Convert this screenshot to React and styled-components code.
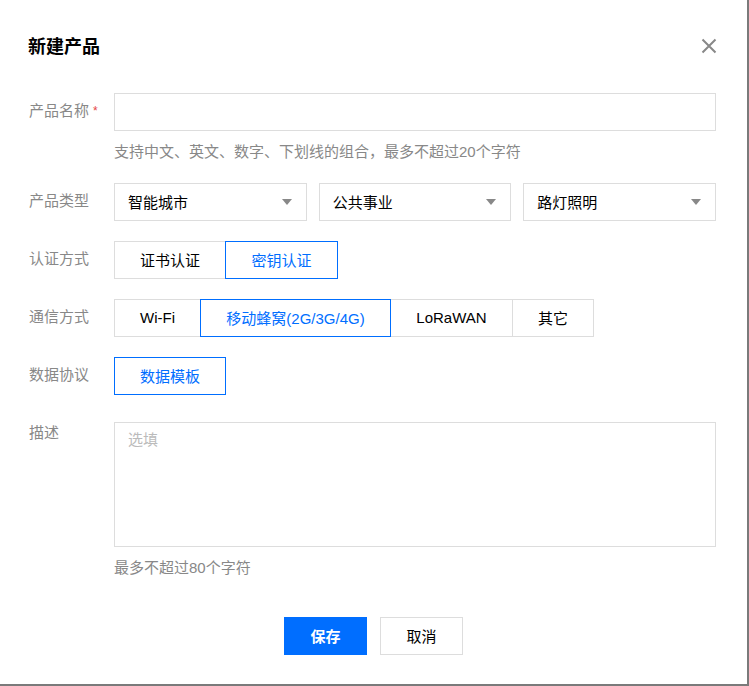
import React from 'react';
import styled, { createGlobalStyle } from 'styled-components';

const GlobalStyle = createGlobalStyle`
  html, body {
    margin: 0;
    padding: 0;
    background: #7a7a7a;
  }
  * {
    box-sizing: border-box;
  }
`

const Dialog = styled.div`
  width: 747px;
  height: 684px;
  background: #fff;
  padding: 0 31px 0 28px;
  font-family: "Liberation Sans", "Noto Sans CJK SC", sans-serif;
  font-size: 15px;
  color: #000;
  display: flex;
  flex-direction: column;
`

const Header = styled.div`
  height: 93px;
  display: flex;
  align-items: flex-start;
  justify-content: space-between;
  padding-top: 35px;
`

const Title = styled.h2`
  margin: 0;
  font-size: 18px;
  line-height: 24px;
  font-weight: bold;
  color: #000;
`

const Close = styled.button`
  width: 16px;
  height: 16px;
  margin-top: 3px;
  margin-right: -1px;
  padding: 0;
  border: 0;
  background: none;
  cursor: pointer;
  display: flex;
`

const Form = styled.div`
  display: flex;
  flex-direction: column;
`

const Row = styled.div`
  display: flex;
  align-items: flex-start;
  margin-bottom: ${p => p.$gap ?? 20}px;
`

const Label = styled.div`
  width: 86px;
  flex-shrink: 0;
  padding-left: 1px;
  color: #888;
  line-height: ${p => (p.$top ? '22px' : '36px')};
`

const Required = styled.span`
  color: #e54545;
  font-size: 12px;
  margin-left: 4px;
  vertical-align: top;
`

const Field = styled.div`
  flex: 1;
  display: flex;
  flex-direction: column;
`

const Input = styled.div`
  height: 38px;
  border: 1px solid #ddd;
  background: #fff;
`

const Hint = styled.div`
  margin-top: 10px;
  line-height: 22px;
  color: #888;
`

const Selects = styled.div`
  display: flex;
  gap: 12px;
`

const Select = styled.div`
  flex: 1;
  height: 38px;
  border: 1px solid #ddd;
  display: flex;
  align-items: center;
  justify-content: space-between;
  padding: 0 14px 2px 13px;
  color: #000;
`

const Caret = styled.span`
  width: 0;
  height: 0;
  margin-top: 2px;
  border-left: 5px solid transparent;
  border-right: 5px solid transparent;
  border-top: 6px solid #888;
`

const Segment = styled.div`
  display: flex;
`

const SegButton = styled.div`
  height: 38px;
  width: ${p => p.$w}px;
  display: flex;
  align-items: center;
  justify-content: center;
  padding-bottom: 1px;
  border: 1px solid ${p => (p.$active ? '#006eff' : '#ddd')};
  color: ${p => (p.$active ? '#006eff' : '#000')};
  margin-left: -1px;
  position: relative;
  z-index: ${p => (p.$active ? 1 : 0)};
  &:first-child {
    margin-left: 0;
  }
`

const TextArea = styled.div`
  height: 125px;
  border: 1px solid #ddd;
  padding: 6px 13px;
  line-height: 22px;
  color: #bbb;
`

const Footer = styled.div`
  margin-top: 38px;
  display: flex;
  justify-content: center;
  gap: 13px;
  padding-left: 3px;
`

const Button = styled.div`
  height: 38px;
  width: 83px;
  display: flex;
  align-items: center;
  justify-content: center;
  padding-bottom: 1px;
  border: 1px solid ${p => (p.$primary ? '#006eff' : '#ddd')};
  background: ${p => (p.$primary ? '#006eff' : '#fff')};
  color: ${p => (p.$primary ? '#fff' : '#000')};
  font-weight: ${p => (p.$primary ? 'bold' : 'normal')};
`

const CloseIcon = () => (
  <svg width="16" height="16" viewBox="0 0 16 16">
    <path d="M1.5 1.5 L14.5 14.5 M14.5 1.5 L1.5 14.5" stroke="#888" strokeWidth="2" fill="none" />
  </svg>
)

export default function App() {
  return (
    <>
      <GlobalStyle />
      <Dialog>
        <Header>
          <Title>新建产品</Title>
          <Close><CloseIcon /></Close>
        </Header>
        <Form>
          <Row>
            <Label>产品名称<Required>*</Required></Label>
            <Field>
              <Input />
              <Hint>支持中文、英文、数字、下划线的组合，最多不超过20个字符</Hint>
            </Field>
          </Row>
          <Row>
            <Label>产品类型</Label>
            <Field>
              <Selects>
                <Select>智能城市<Caret /></Select>
                <Select>公共事业<Caret /></Select>
                <Select>路灯照明<Caret /></Select>
              </Selects>
            </Field>
          </Row>
          <Row>
            <Label>认证方式</Label>
            <Segment>
              <SegButton $w={112}>证书认证</SegButton>
              <SegButton $w={113} $active>密钥认证</SegButton>
            </Segment>
          </Row>
          <Row>
            <Label>通信方式</Label>
            <Segment>
              <SegButton $w={87}>Wi-Fi</SegButton>
              <SegButton $w={191} $active>移动蜂窝(2G/3G/4G)</SegButton>
              <SegButton $w={123}>LoRaWAN</SegButton>
              <SegButton $w={82}>其它</SegButton>
            </Segment>
          </Row>
          <Row $gap={27}>
            <Label>数据协议</Label>
            <Segment>
              <SegButton $w={112} $active>数据模板</SegButton>
            </Segment>
          </Row>
          <Row $gap={0}>
            <Label $top>描述</Label>
            <Field>
              <TextArea>选填</TextArea>
              <Hint>最多不超过80个字符</Hint>
            </Field>
          </Row>
        </Form>
        <Footer>
          <Button $primary>保存</Button>
          <Button>取消</Button>
        </Footer>
      </Dialog>
    </>
  );
}
